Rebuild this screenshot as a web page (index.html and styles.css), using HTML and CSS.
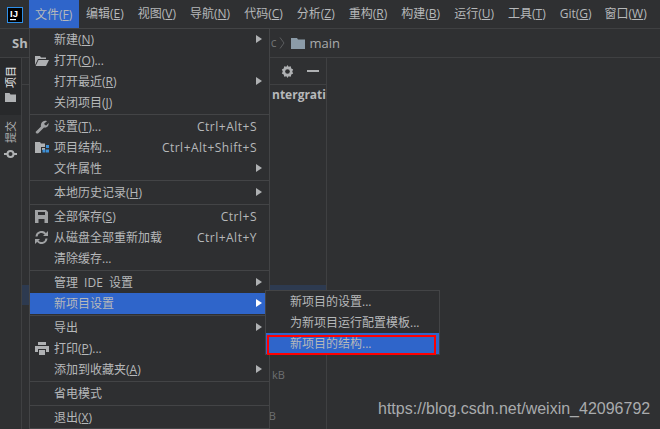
FILE: index.html
```html
<!DOCTYPE html>
<html lang="zh">
<head>
<meta charset="utf-8">
<title>IDE</title>
<link rel="stylesheet" href="styles.css">
</head>
<body>
<div class="app">
  <header class="menubar">
    <div class="logo"><svg width="16" height="16" viewBox="0 0 16 16"><rect x="0.5" y="0.5" width="15" height="15" fill="#000" stroke="#2f8fe8"/><rect x="3" y="12" width="6" height="1.200" fill="#fff"/><text x="3" y="9.500" class="logo-text">IJ</text></svg></div>
    <div class="top active">文件(<u>F</u>)</div>
    <div class="top">编辑(<u>E</u>)</div>
    <div class="top">视图(<u>V</u>)</div>
    <div class="top">导航(<u>N</u>)</div>
    <div class="top">代码(<u>C</u>)</div>
    <div class="top">分析(<u>Z</u>)</div>
    <div class="top">重构(<u>R</u>)</div>
    <div class="top">构建(<u>B</u>)</div>
    <div class="top">运行(<u>U</u>)</div>
    <div class="top">工具(<u>T</u>)</div>
    <div class="top git">Git(<u>G</u>)</div>
    <div class="top">窗口(<u>W</u>)</div>
  </header>
  <div class="crumbs">
    <b class="proj">Sh</b>
    <div class="crumb-end">
      <span class="chev">c</span>
      <svg class="chev-icon" width="6" height="12" viewBox="0 0 6 12"><path d="M1 .5l4 5.500-4 5.500" fill="none" stroke="#5c5e60"/></svg>
      <svg class="crumb-folder" width="14" height="11" viewBox="0 0 14 11"><path d="M0 0h6l1 1.500h7V11H0z" fill="#8b9ba8"/></svg>
      <span>main</span>
    </div>
  </div>
  <div class="body">
    <aside class="strip">
      <div class="tab sel">
        <span class="vtext white">项目</span>
        <svg width="11" height="9" viewBox="0 0 11 9"><path d="M0 0h4.500l1 1.500H11V9H0z" fill="#afb1b3"/></svg>
      </div>
      <div class="tab commit">
        <span class="vtext">提交</span>
        <svg width="13" height="8" viewBox="0 0 13 8"><circle cx="6.500" cy="4" r="3" fill="none" stroke="#afb1b3" stroke-width="2"/><path d="M0 4h3M10 4h3" stroke="#afb1b3" stroke-width="2"/></svg>
      </div>
    </aside>
    <section class="panel">
      <div class="panel-head">
        <svg width="13" height="13" viewBox="0 0 14 14"><path d="M7 0l1.200 2 2.300-.6.600 2.300 2 1.200-1 2.100 1 2.100-2 1.200-.6 2.300-2.300-.6L7 14l-1.200-2-2.300.6-.6-2.300-2-1.200 1-2.100-1-2.100 2-1.200.6-2.300 2.300.6z" fill="#afb1b3"/><circle cx="7" cy="7" r="2.500" fill="#2f3032"/></svg>
        <span class="dash"></span>
      </div>
      <div class="panel-title">ntergrati</div>
      <div class="hover-row"></div>
      <div class="size one">kB</div>
      <div class="size two">kB</div>
    </section>
    <main class="editor"></main>
  </div>

  <nav class="menu main-menu">
    <div class="item"><span class="ic"></span><span class="lb">新建(<u>N</u>)</span><i class="arrow"></i></div>
    <div class="item"><span class="ic"><svg width="14" height="11" viewBox="0 0 14 11"><path d="M0 1h5l1 1.500h5V4H3L0 10z" fill="#afb1b3"/><path d="M3.500 5H14l-3 6H.6z" fill="#afb1b3"/></svg></span><span class="lb">打开(<u>O</u>)...</span></div>
    <div class="item"><span class="ic"></span><span class="lb">打开最近(<u>R</u>)</span><i class="arrow"></i></div>
    <div class="item"><span class="ic"></span><span class="lb">关闭项目(<u>J</u>)</span></div>
    <hr>
    <div class="item"><span class="ic"><svg width="14" height="14" viewBox="0 0 14 14"><path d="M1.500 13.500L.5 12 6 6.500C5.300 4 7 .8 10 .8c.8 0 1.300.1 2 .5L9.200 3.600 9.800 5l1.500.5L13.600 3c.5 2.700-1.500 5.200-4.600 4.600L3 13.500z" fill="#a0a2a4"/></svg></span><span class="lb">设置(<u>T</u>)...</span><span class="key">Ctrl+Alt+S</span></div>
    <div class="item"><span class="ic"><svg width="14" height="11" viewBox="0 0 14 11"><path d="M0 0h5l1 1.500h4V5H6v6H0z" fill="#afb1b3"/><path d="M7 6h3v2H7z" fill="#afb1b3"/><path d="M11 3h3v3h-3zM7.500 7.500h3v3h-3zM11 7.500h3v3h-3z" fill="#3d8fd6"/></svg></span><span class="lb">项目结构...</span><span class="key">Ctrl+Alt+Shift+S</span></div>
    <div class="item"><span class="ic"></span><span class="lb">文件属性</span><i class="arrow"></i></div>
    <hr>
    <div class="item"><span class="ic"></span><span class="lb">本地历史记录(<u>H</u>)</span><i class="arrow"></i></div>
    <hr>
    <div class="item"><span class="ic"><svg width="13" height="13" viewBox="0 0 13 13"><path fill-rule="evenodd" d="M0 0h11l2 2v11H0zM3 2v3h7V2zM3.500 9v4H9.500V9z" fill="#a0a2a4"/></svg></span><span class="lb">全部保存(<u>S</u>)</span><span class="key">Ctrl+S</span></div>
    <div class="item"><span class="ic"><svg width="13" height="13" viewBox="0 0 13 13"><path d="M1.500 5.500A5 5 0 0 1 10.500 3M11.500 7.500A5 5 0 0 1 2.500 10" fill="none" stroke="#a0a2a4" stroke-width="2"/><path d="M8 5h5V0zM5 8H0v5z" fill="#a0a2a4"/></svg></span><span class="lb">从磁盘全部重新加载</span><span class="key">Ctrl+Alt+Y</span></div>
    <div class="item"><span class="ic"></span><span class="lb">清除缓存...</span></div>
    <hr>
    <div class="item"><span class="ic"></span><span class="lb wide">管理 IDE 设置</span><i class="arrow"></i></div>
    <div class="item hl"><span class="ic"></span><span class="lb">新项目设置</span><i class="arrow"></i></div>
    <hr>
    <div class="item"><span class="ic"></span><span class="lb">导出</span><i class="arrow"></i></div>
    <div class="item"><span class="ic"><svg width="14" height="13" viewBox="0 0 14 13"><path fill-rule="evenodd" d="M3 0h8v3H3zM0 4h14v6h-3V7H3v3H0zM4 8h6v5H4z" fill="#afb1b3"/></svg></span><span class="lb">打印(<u>P</u>)...</span></div>
    <div class="item"><span class="ic"></span><span class="lb">添加到收藏夹(<u>A</u>)</span><i class="arrow"></i></div>
    <hr>
    <div class="item"><span class="ic"></span><span class="lb">省电模式</span></div>
    <hr>
    <div class="item"><span class="ic"></span><span class="lb">退出(<u>X</u>)</span></div>
  </nav>

  <nav class="menu sub-menu">
    <div class="item"><span class="lb">新项目的设置...</span></div>
    <div class="item"><span class="lb">为新项目运行配置模板...</span></div>
    <div class="item hl"><span class="lb">新项目的结构...</span></div>
  </nav>
  <div class="redbox"></div>

  <div class="watermark">https://blog.csdn.net/weixin_42096792</div>
</div>
</body>
</html>
```
FILE: styles.css
```css
* { box-sizing: border-box; }
html, body { margin: 0; padding: 0; }
body {
  width: 660px;
  height: 429px;
  overflow: hidden;
  background: #2f3032;
  color: #b6b8ba;
  font: 12px/1 "Open Sans", "Noto Sans CJK SC", sans-serif;
}
u { text-decoration-thickness: 1px; text-underline-offset: 1px; }
.app { position: relative; width: 660px; height: 429px; display: flex; flex-direction: column; }
.menubar { height: 29px; display: flex; align-items: stretch; border-bottom: 1px solid #3f4042; }
.logo { width: 29px; padding: 7px 0 0 7px; }
.logo-text { font: bold 9.500px "Liberation Sans", sans-serif; fill: #fff; }
.top { display: flex; align-items: center; padding: 0 7px; white-space: nowrap; }
.top.active { background: #2f65ca; margin-bottom: -1px; padding: 0 6px; width: 50px; }
.top.git { padding-right: 6px; }
.crumbs { height: 29px; display: flex; align-items: center; padding-left: 12px; border-bottom: 1px solid #3f4042; }
.proj { font-family: "Open Sans", sans-serif; font-size: 13px; }
.crumb-end { margin-left: 243px; display: flex; align-items: center; gap: 4px; color: #a9abad; }
.chev { color: #6f7173; }
.chev-icon { margin-left: -1px; }
.crumb-folder { margin-left: 2px; }
.crumb-end span:last-child { font-size: 13px; }
.body { flex: 1; display: flex; min-height: 0; }
.strip { width: 22px; border-right: 1px solid #3f4042; display: flex; flex-direction: column; }
.tab { display: flex; flex-direction: column; align-items: center; gap: 5px; padding: 8px 0 0; }
.tab.sel { background: #28292b; height: 57px; }
.tab.commit { padding-top: 6px; gap: 7px; }
.vtext { writing-mode: vertical-rl; text-orientation: sideways; transform: rotate(180deg); font-size: 11px; color: #afb1b3; }
.vtext.white { color: #e6e6e6; }
.panel { position: relative; width: 305px; border-right: 1px solid #3f4042; }
.panel-head { height: 27px; border-bottom: 1px solid #3f4042; display: flex; align-items: center; justify-content: flex-end; gap: 13px; padding-right: 7px; }
.dash { width: 12px; height: 2px; background: #afb1b3; }
.panel-title { padding: 4px 0 0 250px; height: 20px; font-weight: 700; overflow: hidden; white-space: nowrap; }
.hover-row { position: absolute; left: 0; top: 227px; width: 304px; height: 20px; background: #2d3a50; }
.size { position: absolute; left: 250px; color: #6d6f71; font-size: 11px; }
.size.one { top: 311px; }
.size.two { top: 352px; left: 241px; }
.editor { flex: 1; }
.menu { position: absolute; background: #2e2f31; border: 1px solid #434446; z-index: 2; }
.main-menu { left: 29px; top: 28px; width: 241px; }
.sub-menu { left: 265px; top: 290px; width: 175px; z-index: 3; }
.item { height: 21px; display: flex; align-items: center; position: relative; white-space: nowrap; }
.main-menu hr { margin: 1px 0; border: 0; border-top: 1px solid #434446; height: 0; }
.main-menu .item { padding-right: 12px; }
.sub-menu .item { padding-left: 24px; }
.item.hl { background: #2f65ca; }
.ic { width: 24px; padding-left: 5px; display: flex; align-items: center; height: 14px; }
.lb { flex: 1; }
.lb.wide { word-spacing: 3px; }
.key { letter-spacing: .5px; }
.arrow { position: absolute; right: 7px; top: 6px; width: 0; height: 0; border-left: 6px solid #afb1b3; border-top: 4px solid transparent; border-bottom: 4px solid transparent; }
.hl .arrow { border-left-color: #fff; }
.redbox { position: absolute; left: 267px; top: 335px; width: 169px; height: 20px; border: 2px solid #ff0000; z-index: 4; }
.watermark { position: absolute; left: 378px; top: 401px; color: #a9abad; font: 16px/1 "Liberation Sans", sans-serif; white-space: nowrap; z-index: 5; }
```
